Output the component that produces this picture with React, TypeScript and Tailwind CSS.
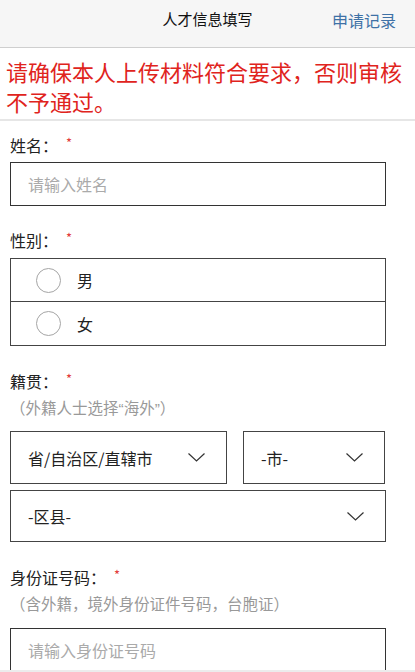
const cjk = "font-['Noto_Sans_CJK_SC','Noto_Sans',sans-serif]";

const Chevron = () => (
  <svg width="17" height="9" viewBox="0 0 17 9" fill="none" className="shrink-0">
    <path d="M0.5 0.5 L8.5 8 L16.5 0.5" stroke="#333" strokeWidth="1.2" />
  </svg>
);

const Label = ({ text, hint }: { text: string; hint?: string }) => (
  <div>
    <div className="flex h-6 items-center text-[16px] leading-6 text-[#222]">
      <span>{text}</span>
      <span className="-mt-1 ml-2 text-[13px] text-[#e23b3b]">*</span>
    </div>
    {hint && (
      <div className="mt-1 h-6 font-['Liberation_Sans','Noto_Sans_CJK_SC',sans-serif] text-[15.5px] leading-6 text-[#999]">
        {hint}
      </div>
    )}
  </div>
);

const Radio = ({ text, last }: { text: string; last?: boolean }) => (
  <div
    className={`flex h-[43px] items-center pl-[25px] ${last ? "" : "border-b border-[#444]"}`}
  >
    <span className="size-[25px] rounded-full border border-[#a5a5a5]" />
    <span className="ml-4 text-[16px] text-[#222]">{text}</span>
  </div>
);

const Select = ({ text, className }: { text: string; className: string }) => (
  <div
    className={`flex items-center justify-between border border-[#444] pl-[17px] pr-[21px] ${className}`}
  >
    <span className="text-[16px] text-[#222]">{text}</span>
    <Chevron />
  </div>
);

export default function App() {
  return (
    <div className={`flex h-[672px] w-[415px] flex-col overflow-hidden bg-white ${cjk}`}>
      <header className="relative flex h-[48px] shrink-0 items-start justify-center border-b border-[#cfcfcf] bg-[#f6f6f6] pt-[7px]">
        <h1 className="text-[15px] leading-6 text-[#111]">人才信息填写</h1>
        <a className="absolute right-[19px] top-[8px] text-[16px] leading-6 text-[#3e71a6]">
          申请记录
        </a>
      </header>

      <p className="shrink-0 border-b-2 border-[#e6e6e6] pb-[3px] pl-[6px] pr-1 pt-[8px] text-[22px] leading-[30px] text-[#e0241d]">
        请确保本人上传材料符合要求，否则审核不予通过。
      </p>

      <form className="flex-1 overflow-hidden border-b-2 border-[#ececec] px-[10px]">
        <div className="mt-[12px]">
          <Label text="姓名：" />
          <div className="mt-[5px] flex h-[44px] w-[376px] items-center border border-[#333] pl-[17px] text-[16px] text-[#aaa]">
            请输入姓名
          </div>
        </div>

        <div className="mt-[22px]">
          <Label text="性别：" />
          <div className="mt-[6px] w-[376px] border border-[#444]">
            <Radio text="男" />
            <Radio text="女" last />
          </div>
        </div>

        <div className="mt-[23px]">
          <Label text="籍贯：" hint="（外籍人士选择“海外”）" />
          <div className="mt-[10px] flex gap-[16px]">
            <Select text="省/自治区/直辖市" className="h-[53px] w-[217px]" />
            <Select text="-市-" className="h-[53px] w-[142px]" />
          </div>
          <Select text="-区县-" className="mt-[6px] h-[52px] w-[376px]" />
        </div>

        <div className="mt-[23px]">
          <Label text="身份证号码：" hint="（含外籍，境外身份证件号码，台胞证）" />
          <div className="mt-[11px] flex h-[44px] w-[376px] items-center border border-[#333] pl-[17px] text-[16px] text-[#aaa]">
            请输入身份证号码
          </div>
        </div>
      </form>
    </div>
  );
}
